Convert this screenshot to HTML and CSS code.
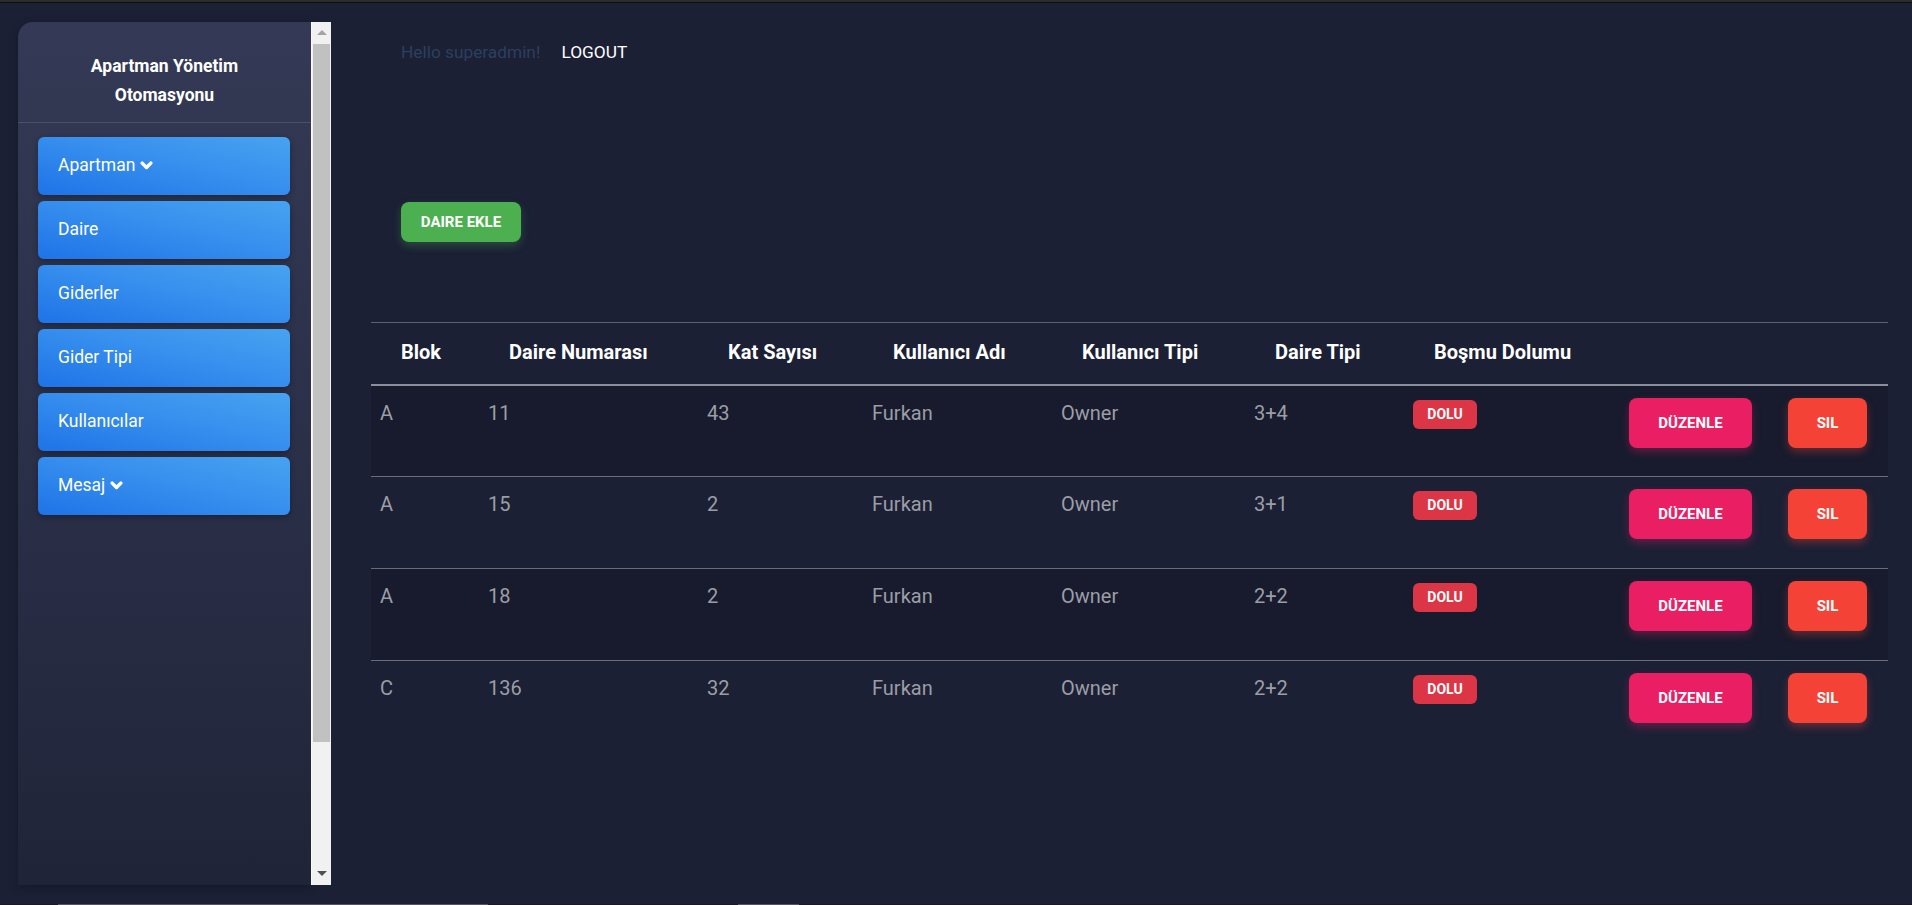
FILE: index.html
```html
<!DOCTYPE html>
<html lang="tr">
<head>
<meta charset="utf-8">
<title>Apartman Yönetim Otomasyonu</title>
<link rel="stylesheet" href="styles.css">
</head>
<body>
<div class="topline"></div>
<div class="layout">
  <div class="sidebar-wrap">
    <aside class="sidebar">
      <div class="brand">Apartman Yönetim<br>Otomasyonu</div>
      <nav class="menu">
        <a class="menu-item">Apartman <svg class="chev" viewBox="0 0 12 12"><polyline points="2,3.8 6,7.8 10,3.8"/></svg></a>
        <a class="menu-item">Daire</a>
        <a class="menu-item">Giderler</a>
        <a class="menu-item">Gider Tipi</a>
        <a class="menu-item">Kullanıcılar</a>
        <a class="menu-item">Mesaj <svg class="chev" viewBox="0 0 12 12"><polyline points="2,3.8 6,7.8 10,3.8"/></svg></a>
      </nav>
    </aside>
    <div class="vscroll">
      <div class="arrow-up"></div>
      <div class="thumb"></div>
      <div class="track-rest"></div>
      <div class="arrow-down"></div>
    </div>
  </div>
  <main class="main">
    <div class="topbar">
      <span class="hello">Hello superadmin!</span>
      <a class="logout">LOGOUT</a>
    </div>
    <div class="actions">
      <button class="btn btn-green">DAIRE EKLE</button>
    </div>
    <table class="grid">
      <colgroup>
        <col class="c1"><col class="c2"><col class="c3"><col class="c4"><col class="c5"><col class="c6"><col class="c7"><col class="c8"><col class="c9">
      </colgroup>
      <thead>
        <tr>
          <th>Blok</th><th>Daire Numarası</th><th>Kat Sayısı</th><th>Kullanıcı Adı</th><th>Kullanıcı Tipi</th><th>Daire Tipi</th><th>Boşmu Dolumu</th><th></th><th></th>
        </tr>
      </thead>
      <tbody>
        <tr class="odd">
          <td>A</td><td>11</td><td>43</td><td>Furkan</td><td>Owner</td><td>3+4</td>
          <td><span class="badge">DOLU</span></td>
          <td><button class="btn btn-pink">DÜZENLE</button></td>
          <td><button class="btn btn-red">SIL</button></td>
        </tr>
        <tr>
          <td>A</td><td>15</td><td>2</td><td>Furkan</td><td>Owner</td><td>3+1</td>
          <td><span class="badge">DOLU</span></td>
          <td><button class="btn btn-pink">DÜZENLE</button></td>
          <td><button class="btn btn-red">SIL</button></td>
        </tr>
        <tr class="odd">
          <td>A</td><td>18</td><td>2</td><td>Furkan</td><td>Owner</td><td>2+2</td>
          <td><span class="badge">DOLU</span></td>
          <td><button class="btn btn-pink">DÜZENLE</button></td>
          <td><button class="btn btn-red">SIL</button></td>
        </tr>
        <tr class="last">
          <td>C</td><td>136</td><td>32</td><td>Furkan</td><td>Owner</td><td>2+2</td>
          <td><span class="badge">DOLU</span></td>
          <td><button class="btn btn-pink">DÜZENLE</button></td>
          <td><button class="btn btn-red">SIL</button></td>
        </tr>
      </tbody>
    </table>
  </main>
</div>
<div class="hscroll">
  <div class="hs-seg hs-a"></div>
  <div class="hs-seg hs-b"></div>
</div>
</body>
</html>
```
FILE: styles.css
```css
* { box-sizing: border-box; }
html, body { height: 100%; }
body {
  margin: 0;
  background: #1b2035;
  font-family: Roboto, "Noto Sans", "Liberation Sans", sans-serif;
  overflow: hidden;
  display: flex;
  flex-direction: column;
}
.topline {
  height: 3px;
  flex: 0 0 3px;
  background: linear-gradient(#2c2c2c 0 2px, #0e0e0e 2px 3px);
}
.layout {
  display: flex;
  flex: 1 1 auto;
  min-height: 0;
}
.sidebar-wrap {
  display: flex;
  margin: 19px 0 0 18px;
  height: 863px;
}
.sidebar {
  width: 293px;
  background: linear-gradient(180deg, #343a55 0%, #2a2f48 55%, #1f2438 100%);
  border-top-left-radius: 15px;
  box-shadow: 0 2px 10px rgba(0,0,0,.25);
}
.brand {
  color: #fff;
  font-weight: 700;
  font-size: 17.5px;
  line-height: 29px;
  text-align: center;
  padding: 30px 0 12px;
  border-bottom: 1px solid #4a5069;
}
.menu {
  display: flex;
  flex-direction: column;
  gap: 6px;
  padding: 14px 21px 0 20px;
}
.menu-item {
  display: flex;
  align-items: center;
  gap: 5px;
  height: 58px;
  padding: 0 0 2px 20px;
  border-radius: 6px;
  color: #fff;
  font-size: 17.5px;
  background: linear-gradient(to top right, #1f73e7 0%, #3790ee 55%, #47a3f0 100%);
  box-shadow: 0 2px 6px rgba(0,0,0,.3);
}
.chev {
  width: 13px;
  height: 13px;
  fill: none;
  stroke: #fff;
  stroke-width: 3.2;
  stroke-linecap: round;
  stroke-linejoin: round;
}
.vscroll {
  width: 20px;
  display: flex;
  flex-direction: column;
  background: #f1f1f1;
  border-left: 1px solid #fafafa;
}
.arrow-up, .arrow-down {
  height: 22px;
  flex: 0 0 22px;
  position: relative;
}
.arrow-up::after, .arrow-down::after {
  content: "";
  position: absolute;
  left: 5px;
  border-left: 5px solid transparent;
  border-right: 5px solid transparent;
}
.arrow-up::after { top: 8px; border-bottom: 5px solid #a3a3a3; }
.arrow-down::after { top: 8px; border-top: 5px solid #505050; }
.thumb {
  height: 698px;
  margin: 0 1px 0 1px;
  background: #c1c1c1;
}
.track-rest { flex: 1; }
.main {
  flex: 1;
  margin: 0 24px 0 40px;
}
.topbar {
  margin-top: 39px;
  padding-left: 30px;
  display: flex;
  gap: 21px;
  font-size: 17.3px;
  line-height: 20px;
}
.hello { color: #2c3f5f; }
.logout { color: #fff; }
.actions {
  margin-top: 140px;
  padding-left: 30px;
  height: 40px;
}
.btn {
  border: 0;
  color: #fff;
  font-family: Roboto, "Noto Sans", "Liberation Sans", sans-serif;
  font-weight: 700;
  font-size: 15px;
  border-radius: 8px;
  cursor: pointer;
  padding: 0;
}
.btn-green {
  width: 120px;
  height: 40px;
  background: #4caf50;
  box-shadow: 0 4px 8px rgba(76,175,80,.3);
}
.btn-pink {
  width: 123px;
  height: 50px;
  background: #e91e63;
  box-shadow: 0 4px 8px rgba(233,30,99,.35);
  margin-top: -4px;
}
.btn-red {
  width: 79px;
  height: 50px;
  background: #f44336;
  box-shadow: 0 4px 8px rgba(244,67,54,.35);
  margin-top: -4px;
}
.grid {
  margin-top: 80px;
  width: 100%;
  table-layout: fixed;
  border-collapse: collapse;
}
.c1 { width: 108px; }
.c2 { width: 219px; }
.c3 { width: 165px; }
.c4 { width: 189px; }
.c5 { width: 193px; }
.c6 { width: 159px; }
.c7 { width: 216px; }
.c8 { width: 159px; }
.c9 { width: auto; }
.grid thead tr {
  border-top: 1px solid #5c6072;
  border-bottom: 2px solid #8a8d9a;
}
.grid th {
  height: 62px;
  text-align: left;
  color: #fff;
  font-weight: 700;
  font-size: 20px;
  padding: 0 0 2px 30px;
  vertical-align: middle;
}
.grid tbody tr {
  height: 92px;
  border-bottom: 1px solid #676b7a;
}
.grid tbody tr.last { border-bottom: 0; }
.grid tbody tr.odd { background: #171b2d; }
.grid td {
  vertical-align: top;
  padding: 16px 9px 0;
  color: #9c9ea6;
  font-size: 20px;
  line-height: 22px;
}
.badge {
  display: inline-block;
  height: 29px;
  line-height: 29px;
  padding: 0 10px;
  min-width: 64px;
  text-align: center;
  border-radius: 6px;
  background: #dc3545;
  color: #fff;
  font-weight: 700;
  font-size: 14px;
  margin-top: -2px;
  vertical-align: top;
}
.hscroll {
  height: 1px;
  flex: 0 0 1px;
  background: #1a1a1a;
  position: relative;
}
.hs-seg {
  position: absolute;
  top: 0;
  height: 1px;
  background: #555;
}
.hs-a { left: 58px; width: 430px; }
.hs-b { left: 738px; width: 61px; }
```
